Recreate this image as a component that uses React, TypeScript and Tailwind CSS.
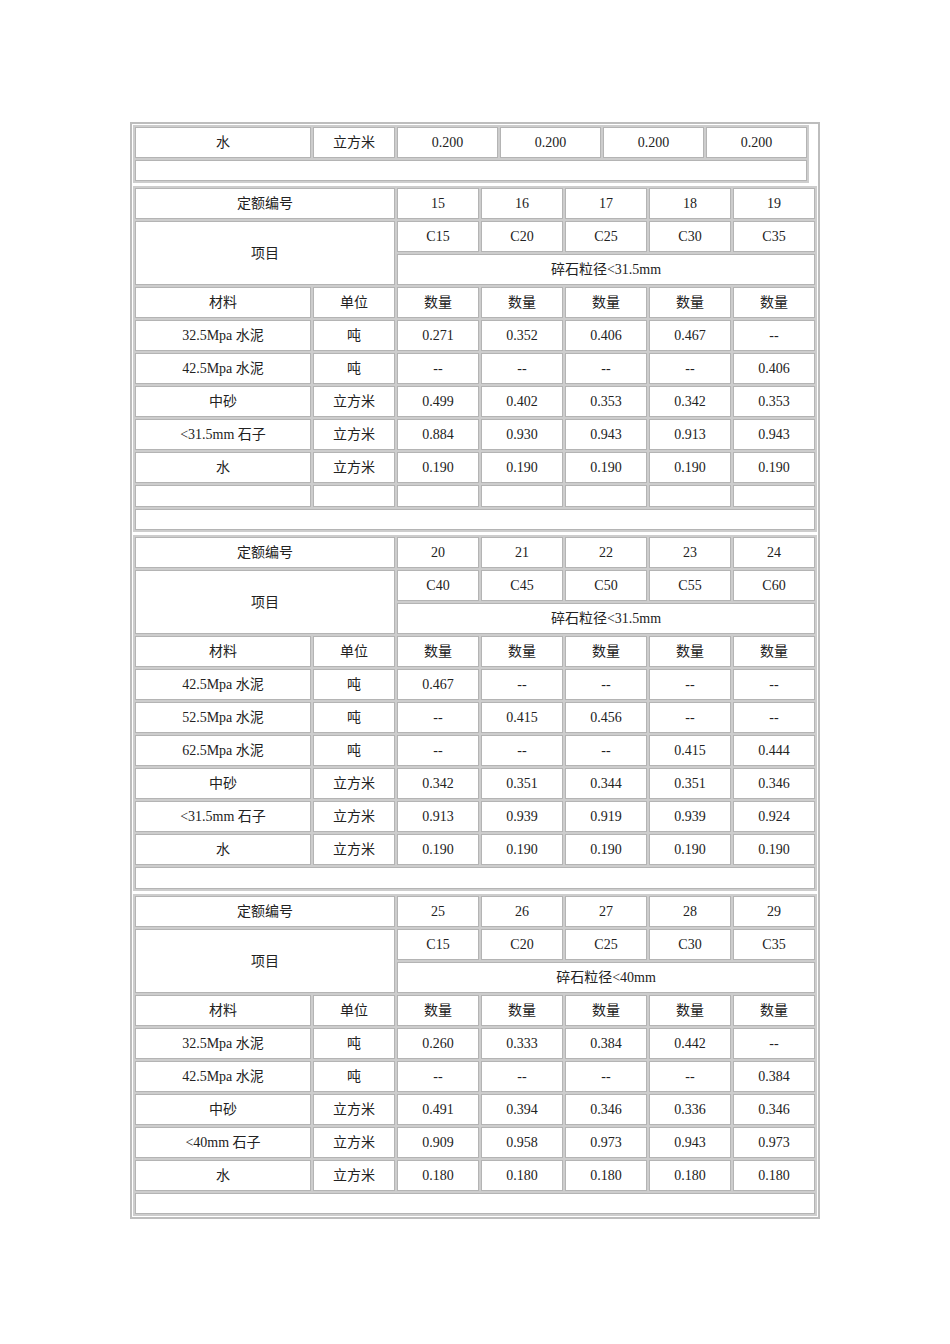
const font = { fontFamily: '"Liberation Serif", "Noto Sans CJK SC", serif' }

type Row = { name: string; unit: string; values: string[] }

type Block = {
  ids: string[]
  grades: string[]
  size: string
  rows: Row[]
  blankRow?: boolean
  tall?: boolean
}

const blocks: Block[] = [
  {
    ids: ['15', '16', '17', '18', '19'],
    grades: ['C15', 'C20', 'C25', 'C30', 'C35'],
    size: '碎石粒径<31.5mm',
    rows: [
      { name: '32.5Mpa 水泥', unit: '吨', values: ['0.271', '0.352', '0.406', '0.467', '--'] },
      { name: '42.5Mpa 水泥', unit: '吨', values: ['--', '--', '--', '--', '0.406'] },
      { name: '中砂', unit: '立方米', values: ['0.499', '0.402', '0.353', '0.342', '0.353'] },
      { name: '<31.5mm 石子', unit: '立方米', values: ['0.884', '0.930', '0.943', '0.913', '0.943'] },
      { name: '水', unit: '立方米', values: ['0.190', '0.190', '0.190', '0.190', '0.190'] },
    ],
    blankRow: true,
  },
  {
    ids: ['20', '21', '22', '23', '24'],
    grades: ['C40', 'C45', 'C50', 'C55', 'C60'],
    size: '碎石粒径<31.5mm',
    rows: [
      { name: '42.5Mpa 水泥', unit: '吨', values: ['0.467', '--', '--', '--', '--'] },
      { name: '52.5Mpa 水泥', unit: '吨', values: ['--', '0.415', '0.456', '--', '--'] },
      { name: '62.5Mpa 水泥', unit: '吨', values: ['--', '--', '--', '0.415', '0.444'] },
      { name: '中砂', unit: '立方米', values: ['0.342', '0.351', '0.344', '0.351', '0.346'] },
      { name: '<31.5mm 石子', unit: '立方米', values: ['0.913', '0.939', '0.919', '0.939', '0.924'] },
      { name: '水', unit: '立方米', values: ['0.190', '0.190', '0.190', '0.190', '0.190'] },
    ],
    tall: true,
  },
  {
    ids: ['25', '26', '27', '28', '29'],
    grades: ['C15', 'C20', 'C25', 'C30', 'C35'],
    size: '碎石粒径<40mm',
    rows: [
      { name: '32.5Mpa 水泥', unit: '吨', values: ['0.260', '0.333', '0.384', '0.442', '--'] },
      { name: '42.5Mpa 水泥', unit: '吨', values: ['--', '--', '--', '--', '0.384'] },
      { name: '中砂', unit: '立方米', values: ['0.491', '0.394', '0.346', '0.336', '0.346'] },
      { name: '<40mm 石子', unit: '立方米', values: ['0.909', '0.958', '0.973', '0.943', '0.973'] },
      { name: '水', unit: '立方米', values: ['0.180', '0.180', '0.180', '0.180', '0.180'] },
    ],
  },
]

const cell = 'border border-[#b4b4b4] bg-white p-0 text-center align-middle h-[31px] text-[14px] text-[#222] whitespace-nowrap'
const tableCls = 'table-fixed border-separate border-spacing-[2px] bg-[#cdcdcd]'

function TopBlock() {
  return (
    <table className={`${tableCls} w-[676px]`}>
      <colgroup>
        <col className="w-[176px]" />
        <col className="w-[82px]" />
        <col className="w-[101px]" />
        <col className="w-[101px]" />
        <col className="w-[101px]" />
        <col className="w-[101px]" />
      </colgroup>
      <tbody>
        <tr>
          <td className={cell}>水</td>
          <td className={cell}>立方米</td>
          <td className={cell}>0.200</td>
          <td className={cell}>0.200</td>
          <td className={cell}>0.200</td>
          <td className={cell}>0.200</td>
        </tr>
        <tr>
          <td colSpan={6} className={`${cell} !h-[21px]`}></td>
        </tr>
      </tbody>
    </table>
  )
}

function RatioBlock({ block }: { block: Block }) {
  return (
    <table className={`${tableCls} w-[684px]`}>
      <colgroup>
        <col className="w-[176px]" />
        <col className="w-[82px]" />
        <col className="w-[82px]" />
        <col className="w-[82px]" />
        <col className="w-[82px]" />
        <col className="w-[82px]" />
        <col className="w-[82px]" />
      </colgroup>
      <tbody>
        <tr>
          <td colSpan={2} className={cell}>定额编号</td>
          {block.ids.map((id) => (
            <td key={id} className={cell}>{id}</td>
          ))}
        </tr>
        <tr>
          <td colSpan={2} rowSpan={2} className={cell}>项目</td>
          {block.grades.map((g, i) => (
            <td key={i} className={cell}>{g}</td>
          ))}
        </tr>
        <tr>
          <td colSpan={5} className={cell}>{block.size}</td>
        </tr>
        <tr>
          <td className={cell}>材料</td>
          <td className={cell}>单位</td>
          {block.ids.map((id) => (
            <td key={id} className={cell}>数量</td>
          ))}
        </tr>
        {block.rows.map((r, i) => (
          <tr key={i}>
            <td className={cell}>{r.name}</td>
            <td className={cell}>{r.unit}</td>
            {r.values.map((v, j) => (
              <td key={j} className={cell}>{v}</td>
            ))}
          </tr>
        ))}
        {block.blankRow && (
          <tr>
            {Array.from({ length: 7 }).map((_, i) => (
              <td key={i} className={`${cell} !h-[22px]`}></td>
            ))}
          </tr>
        )}
        <tr>
          <td colSpan={7} className={block.tall ? `${cell} !h-[22px]` : `${cell} !h-[21px]`}></td>
        </tr>
      </tbody>
    </table>
  )
}

export default function App() {
  return (
    <div className="min-h-[1344px] w-[950px] bg-white pt-[122px]" style={font}>
      <div className="ml-[130px] w-[690px] border-2 border-[#bdbdbd] bg-white p-px">
        <div className="flex flex-col gap-[3px]">
          <TopBlock />
          {blocks.map((b, i) => (
            <RatioBlock key={i} block={b} />
          ))}
        </div>
      </div>
    </div>
  )
}
